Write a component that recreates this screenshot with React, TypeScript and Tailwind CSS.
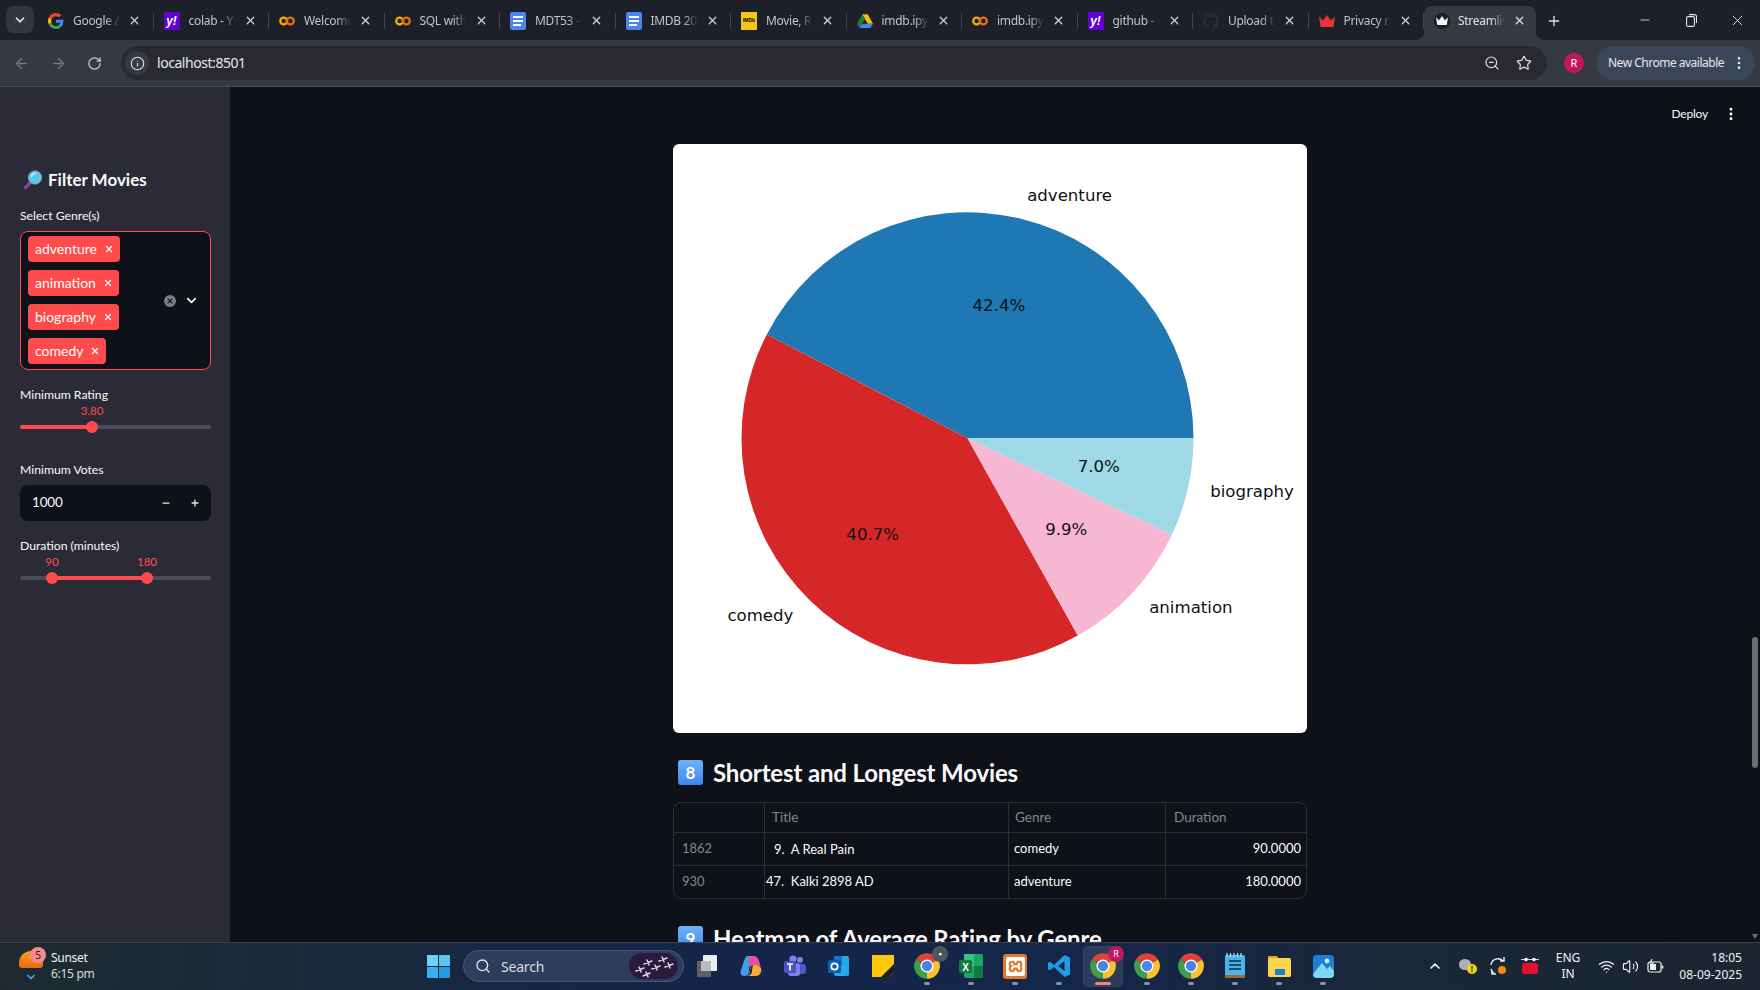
import React from "react";
import { ArrowLeft, ArrowRight, RotateCw, Info, ZoomOut, Star, EllipsisVertical, Plus, Minus, X, ChevronDown, ChevronUp, Wifi, Volume2, Search } from "lucide-react";
import { SiXampp, SiGithub } from "react-icons/si";

const Chrome = ({ s = 28 }: { s?: number }) => (
  <svg width={s} height={s} viewBox="0 0 24 24">
    <path d="M12 12 L2.47 6.5 A11 11 0 0 1 21.53 6.5 Z" fill="#db4437" />
    <path d="M12 12 L21.53 6.5 A11 11 0 0 1 12 23 Z" fill="#fbc02d" />
    <path d="M12 12 L12 23 A11 11 0 0 1 2.47 6.5 Z" fill="#3f9e4d" />
    <circle cx="12" cy="12" r="5.6" fill="#fff" />
    <circle cx="12" cy="12" r="4.4" fill="#4a86e8" />
  </svg>
);

const GoogleG = () => (
  <svg width="16" height="18" viewBox="0 0 48 48">
    <path fill="#EA4335" d="M24 9.5c3.5 0 6.7 1.2 9.2 3.6l6.9-6.9C35.9 2.4 30.5 0 24 0 14.6 0 6.5 5.4 2.6 13.2l8 6.2C12.4 13.7 17.7 9.5 24 9.5z" />
    <path fill="#4285F4" d="M46.9 24.5c0-1.6-.1-3.1-.4-4.5H24v9h12.9c-.6 3-2.2 5.5-4.7 7.2l7.3 5.7c4.3-4 6.4-9.9 6.4-17.4z" />
    <path fill="#FBBC05" d="M10.5 28.6c-.5-1.4-.8-3-.8-4.6s.3-3.2.8-4.6l-8-6.2C.9 16.5 0 20.1 0 24s.9 7.5 2.6 10.8l7.9-6.2z" />
    <path fill="#34A853" d="M24 48c6.5 0 11.9-2.1 15.9-5.8l-7.3-5.7c-2.2 1.5-5 2.4-8.6 2.4-6.3 0-11.6-4.2-13.5-10l-8 6.2C6.5 42.6 14.6 48 24 48z" />
  </svg>
);

const Yahoo = () => (
  <div className="w-[16px] h-[18px] bg-[#5f01d1] flex items-center justify-center text-white text-[12px] font-bold leading-none italic font-[family-name:'Liberation_Sans',sans-serif]">y!</div>
);

const Colab = () => (
  <svg width="18" height="12" viewBox="0 0 18 12" fill="none" stroke="#f9ab00" strokeWidth="2.6">
    <circle cx="5.2" cy="6" r="3.8" />
    <circle cx="12.8" cy="6" r="3.8" stroke="#e8710a" />
  </svg>
);

const Docs = () => (
  <div className="w-[16px] h-[18px] bg-[#4a86f0] rounded-[2px] flex flex-col items-center justify-center gap-[2px]">
    <div className="w-[10px] h-[2px] bg-white" />
    <div className="w-[10px] h-[2px] bg-white" />
    <div className="w-[8px] h-[2px] bg-white self-start ml-[3px]" />
  </div>
);

const Imdb = () => (
  <div className="w-[16px] h-[18px] bg-[#f5c518] flex items-center justify-center text-black text-[5px] font-bold leading-none font-[family-name:'Liberation_Sans',sans-serif]">IMDb</div>
);

const Drive = () => (
  <svg width="16" height="16" viewBox="0 0 24 22">
    <path d="M8 1h8l8 14h-8z" fill="#fbbc04" />
    <path d="M8 1 0 15l4 6.5L12 8z" fill="#188038" />
    <path d="M4 21.5h16l4-6.5H8z" fill="#4285f4" />
  </svg>
);

const Crown = ({ color, s = 16 }: { color: string; s?: number }) => (
  <svg width={s} height={s * 0.75} viewBox="0 0 20 15">
    <path d="M0 2l5 5 5-7 5 7 5-5-2 13H2z" fill={color} />
  </svg>
);

const StreamlitFav = () => (
  <div className="w-[16px] h-[16px] rounded-full bg-[#1b1d23] flex items-center justify-center">
    <Crown color="#f2f2f2" s={12} />
  </div>
);

const tabs: { label: string; icon: React.ReactNode }[] = [
  { label: "Google A", icon: <GoogleG /> },
  { label: "colab - Y", icon: <Yahoo /> },
  { label: "Welcome", icon: <Colab /> },
  { label: "SQL with", icon: <Colab /> },
  { label: "MDT53 -", icon: <Docs /> },
  { label: "IMDB 20", icon: <Docs /> },
  { label: "Movie, R", icon: <Imdb /> },
  { label: "imdb.ipy", icon: <Drive /> },
  { label: "imdb.ipy", icon: <Colab /> },
  { label: "github -", icon: <Yahoo /> },
  { label: "Upload t", icon: <SiGithub size={16} color="#2a2d33" /> },
  { label: "Privacy r", icon: <Crown color="#e8333a" /> },
];

const Tab = ({ label, icon }: { label: string; icon: React.ReactNode }) => (
  <div className="flex items-center w-[115.5px] h-[34px] pb-[5px] pl-[10px] shrink-0">
    <div className="w-[16px] flex justify-center shrink-0">{icon}</div>
    <div className="ml-[9px] w-[47px] overflow-hidden whitespace-nowrap text-[12px] tracking-[-0.3px] text-[#c2c4c7] [mask-image:linear-gradient(to_right,black_70%,transparent)]">{label}</div>
    <X size={13} strokeWidth={2.2} className="ml-[8px] text-[#d5d7da] shrink-0" />
    <div className="ml-auto w-px h-[16px] bg-[#42454c]" />
  </div>
);

const ActiveTab = () => (
  <div className="relative flex items-center w-[112px] h-[34px] pb-[5px] pl-[10px] bg-[#363941] rounded-t-[8px] shrink-0">
    <StreamlitFav />
    <div className="ml-[8px] w-[47px] overflow-hidden whitespace-nowrap text-[12px] tracking-[-0.3px] text-[#e3e4e6] [mask-image:linear-gradient(to_right,black_70%,transparent)]">Streamlit</div>
    <X size={13} strokeWidth={2.2} className="ml-[8px] text-[#e3e4e6] shrink-0" />
    <svg className="absolute left-[-8px] bottom-0" width="8" height="8" viewBox="0 0 8 8"><path d="M8 0v8H0a8 8 0 0 0 8-8z" fill="#363941" /></svg>
    <svg className="absolute right-[-8px] bottom-0" width="8" height="8" viewBox="0 0 8 8"><path d="M0 0v8h8a8 8 0 0 1-8-8z" fill="#363941" /></svg>
  </div>
);

const TabStrip = () => (
  <div className="flex items-end h-[40px] bg-[#1d2028] relative shrink-0">
    <div className="w-[38px] h-[40px] shrink-0 flex items-start pl-[6px] pt-[6px]">
      <div className="w-[28px] h-[27px] rounded-[8px] bg-[#33363e] flex items-center justify-center">
        <ChevronDown size={14} strokeWidth={3} className="text-[#e6e7e9]" />
      </div>
    </div>
    {tabs.map((t, i) => <Tab key={i} {...t} />)}
    <ActiveTab />
    <div className="h-[34px] pb-[5px] ml-[10px] flex items-center">
      <Plus size={16} strokeWidth={2} className="text-[#dfe0e2]" />
    </div>
    <div className="ml-auto flex items-center h-[40px] text-[#e5e6e8]">
      <div className="w-[46px] flex justify-center"><Minus size={14} strokeWidth={1.4} /></div>
      <div className="w-[46px] flex justify-center">
        <svg width="11" height="13" viewBox="0 0 11 13" fill="none" stroke="currentColor" strokeWidth="1.100">
          <rect x="0.600" y="2.600" width="7.800" height="9.800" rx="1.500" />
          <path d="M3 0.600h5.500a2 2 0 0 1 2 2v6.500" />
        </svg>
      </div>
      <div className="w-[46px] flex justify-center"><X size={17} strokeWidth={1.3} /></div>
    </div>
  </div>
);

const Toolbar = () => (
  <div className="flex items-center h-[47px] bg-[#363941] border-b border-[#4a4c52] shrink-0 text-[#c9cbce]">
    <div className="w-[121px] flex items-center shrink-0">
      <ArrowLeft size={17} strokeWidth={2} className="ml-[13px] text-[#74777d]" />
      <ArrowRight size={17} strokeWidth={2} className="ml-[20px] text-[#74777d]" />
      <RotateCw size={15} strokeWidth={2} className="ml-[20px] text-[#c9cbce]" />
    </div>
    <div className="flex items-center w-[1426px] h-[34px] rounded-full bg-[#282a30] shrink-0">
      <div className="ml-[4px] w-[24px] h-[24px] rounded-full bg-[#363941] flex items-center justify-center">
        <Info size={15} strokeWidth={1.8} className="text-[#e3e4e6]" />
      </div>
      <span className="ml-[8px] pb-[1px] text-[14px] tracking-[-0.45px] text-[#e6e7e9]">localhost:8501</span>
      <ZoomOut size={16} strokeWidth={1.8} className="ml-auto mr-[16px] text-[#dadbdd]" />
      <Star size={16} strokeWidth={1.8} className="mr-[15px] text-[#dadbdd]" />
    </div>
    <div className="ml-[17px] w-[20px] h-[20px] rounded-full bg-[#c2185b] text-[11px] text-white flex items-center justify-center shrink-0">R</div>
    <div className="ml-[12px] w-[159px] h-[34px] rounded-full bg-[#3b4558] flex items-center pl-[12px] shrink-0">
      <span className="text-[12px] tracking-[-0.5px] text-[#e8eaed] whitespace-nowrap">New Chrome available</span>
      <EllipsisVertical size={16} className="ml-auto mr-[8px] text-[#e8eaed]" />
    </div>
  </div>
);

const MagnifierEmoji = () => (
  <svg width="20" height="20" viewBox="0 0 20 20">
    <path d="M8 12 L2.5 17.5" stroke="#7b4a9e" strokeWidth="3.6" strokeLinecap="round" />
    <circle cx="12" cy="7.5" r="6.6" fill="#55c8ee" stroke="#8fa3b8" strokeWidth="1" />
    <path d="M8.5 6.5a4 4 0 0 1 4-3.2" stroke="#c6eefb" strokeWidth="1.4" fill="none" strokeLinecap="round" />
  </svg>
);

const Chip = ({ label }: { label: string }) => (
  <div className="flex items-center h-[26px] w-fit rounded-[4px] bg-[#ff4b4b] pl-[7px] pr-[6px] text-white text-[14px] leading-none">
    <span>{label}</span>
    <X size={10} strokeWidth={3} className="ml-[7px]" />
  </div>
);

const Label = ({ children, className = "" }: { children: React.ReactNode; className?: string }) => (
  <div className={`h-[16px] text-[12.2px] leading-[18px] text-[#fafafa] ${className}`}>{children}</div>
);

const Track = ({ start, width }: { start: number; width: number }) => (
  <div className="h-[4px] w-[191px] rounded-full bg-[#4b4c57] mt-[7px] relative">
    <div className="h-[4px] bg-[#ff4b4b] rounded-full" style={{ marginLeft: start, width }} />
    <div className="absolute top-[-4px] w-[12px] h-[12px] rounded-full bg-[#ff4b4b]" style={{ left: start + width - 6 }} />
    {start > 0 && <div className="absolute top-[-4px] w-[12px] h-[12px] rounded-full bg-[#ff4b4b]" style={{ left: start - 6 }} />}
  </div>
);

const Value = ({ left, children }: { left: number; children: React.ReactNode }) => (
  <span className="absolute -translate-x-1/2 text-[11.5px] leading-[14px] text-[#ff4b4b]" style={{ left }}>{children}</span>
);

const Sidebar = () => (
  <aside className="w-[230px] shrink-0 bg-[#2a2b36] pl-[20px] pt-[81px] font-[family-name:Lato,sans-serif]">
    <div className="flex items-center h-[24px] ml-[3px]">
      <MagnifierEmoji />
      <span className="ml-[5px] text-[17px] font-bold text-[#fafafa]">Filter Movies</span>
    </div>
    <Label className="mt-[15px]">Select Genre(s)</Label>
    <div className="mt-[8px] w-[191px] h-[139px] rounded-[8px] border border-[#ff4b4b] bg-[#0e1117] flex items-center">
      <div className="flex flex-col gap-[8px] pl-[7px] pb-[2px] w-[140px]">
        <Chip label="adventure" />
        <Chip label="animation" />
        <Chip label="biography" />
        <Chip label="comedy" />
      </div>
      <div className="ml-[3px] w-[12px] h-[12px] rounded-full bg-[#7c7d88] flex items-center justify-center">
        <X size={8} strokeWidth={3.5} className="text-[#1b1c22]" />
      </div>
      <ChevronDown size={15} strokeWidth={2.6} className="ml-[8px] text-white" />
    </div>
    <Label className="mt-[16px]">Minimum Rating</Label>
    <div className="relative h-[14px] mt-[2px]"><Value left={72}>3.80</Value></div>
    <Track start={0} width={72} />
    <Label className="mt-[32px]">Minimum Votes</Label>
    <div className="mt-[8px] w-[191px] h-[36px] rounded-[8px] bg-[#0e1117] flex items-center pl-[12px] pb-[1px] text-[13.5px] tracking-[-0.2px] text-[#fafafa]">
      <span>1000</span>
      <Minus size={10} strokeWidth={3} className="ml-auto text-[#e8e8ea]" />
      <Plus size={10} strokeWidth={3.2} className="ml-[19px] mr-[11px] text-[#e8e8ea]" />
    </div>
    <Label className="mt-[16px]">Duration (minutes)</Label>
    <div className="relative h-[14px] mt-[2px]"><Value left={32}>90</Value><Value left={127}>180</Value></div>
    <Track start={32} width={95} />
  </aside>
);

const Pie = () => (
  <svg width="634" height="589" viewBox="0 0 634 589" className="block">
    <path d="M294.5 294.3 L520.5 294.3 A226 226 0 0 0 93.8 190.4 Z" fill="#1f77b4" />
    <path d="M294.5 294.3 L93.8 190.4 A226 226 0 0 0 404.8 491.6 Z" fill="#d62728" />
    <path d="M294.5 294.3 L404.8 491.6 A226 226 0 0 0 499 390.5 Z" fill="#f7b6d2" />
    <path d="M294.5 294.3 L499 390.5 A226 226 0 0 0 520.5 294.3 Z" fill="#9edae5" />
    <g fontFamily="'DejaVu Sans', sans-serif" fontSize="16.6" textAnchor="middle" dominantBaseline="central" fill="#111">
      <text x="396.6" y="51.3">adventure</text>
      <text x="579" y="347.6">biography</text>
      <text x="517.9" y="463.2">animation</text>
      <text x="87.4" y="471">comedy</text>
      <text x="325.9" y="161.3">42.4%</text>
      <text x="199.7" y="390.3">40.7%</text>
      <text x="393.3" y="385.8">9.9%</text>
      <text x="425.8" y="322.9">7.0%</text>
    </g>
  </svg>
);

const Heading = ({ n, children, className = "" }: { n: string; children: React.ReactNode; className?: string }) => (
  <div className={`flex items-center h-[25px] pl-[5px] ${className}`}>
    <div className="w-[25px] h-[25px] rounded-[3px] bg-gradient-to-b from-[#6db3f8] to-[#3c86ec] flex items-center justify-center text-white text-[17px] font-bold leading-none">{n}</div>
    <h3 className="ml-[10px] text-[24px] tracking-[-0.15px] font-bold text-[#fafafa] leading-[25px] whitespace-nowrap">{children}</h3>
  </div>
);

const cols = "grid grid-cols-[90px_244px_157px_141px]";
const cell = "flex items-center border-l border-[#2b2d33]";

const DataTable = () => (
  <div className="mt-[17px] w-[634px] rounded-[8px] border border-[#2b2d33] overflow-hidden text-[13px]">
    <div className={`${cols} h-[29px] text-[13.5px] text-[#85868c]`}>
      <div />
      <div className={`${cell} pl-[7px]`}>Title</div>
      <div className={`${cell} pl-[6px]`}>Genre</div>
      <div className={`${cell} pl-[8px]`}>Duration</div>
    </div>
    <div className={`${cols} h-[33px] border-t border-[#2b2d33] text-[#fafafa]`}>
      <div className="flex items-center pl-[8px] text-[#85868c]">1862</div>
      <div className={`${cell} pl-[9px] pt-[2px] whitespace-pre`}>9.  A Real Pain</div>
      <div className={`${cell} pl-[5px]`}>comedy</div>
      <div className={`${cell} justify-end pr-[5px]`}>90.0000</div>
    </div>
    <div className={`${cols} h-[33px] border-t border-[#2b2d33] text-[#fafafa]`}>
      <div className="flex items-center pl-[8px] text-[#85868c]">930</div>
      <div className={`${cell} pl-[1px] whitespace-pre`}>47.  Kalki 2898 AD</div>
      <div className={`${cell} pl-[5px]`}>adventure</div>
      <div className={`${cell} justify-end pr-[5px]`}>180.0000</div>
    </div>
  </div>
);

const Main = () => (
  <main className="relative flex-1 min-w-0 overflow-hidden bg-[#0e1117] font-[family-name:Lato,sans-serif]">
    <div className="flex items-center justify-end h-[54px] pr-[21px] text-[#fafafa]">
      <span className="text-[12px] tracking-[-0.2px]">Deploy</span>
      <EllipsisVertical size={16} strokeWidth={2.4} className="ml-[15px]" />
    </div>
    <div className="ml-[443px] w-[634px] mt-[3px]">
      <div className="bg-white rounded-[6px] overflow-hidden"><Pie /></div>
      <Heading n="8" className="mt-[27px]">Shortest and Longest Movies</Heading>
      <DataTable />
      <Heading n="9" className="mt-[27px]">Heatmap of Average Rating by Genre</Heading>
    </div>
    <div className="absolute right-[2px] top-[550px] w-[6px] h-[131px] rounded-full bg-[#6b6d70]" />
    <svg className="absolute right-[2px] bottom-[3px]" width="6" height="5" viewBox="0 0 6 5"><path d="M0 0h6L3 5z" fill="#6b6d70" /></svg>
  </main>
);

const Planes = () => (
  <svg width="49" height="26" viewBox="0 0 49 26">
    <rect width="49" height="26" rx="13" fill="#2b1a3e" />
    <g stroke="#d9d7e2" strokeWidth="1.5" strokeLinecap="round">
      <path d="M7 18l8-3M10 14l2 5" /><path d="M15 11l8-3M18 7l2 5" /><path d="M23 16l8-3M26 12l2 5" />
      <path d="M30 8l8-3M33 4l2 5" /><path d="M36 14l8-3M39 10l2 5" /><path d="M14 23l7-3M17 19l2 5" />
    </g>
  </svg>
);

const Slot = ({ children, dot, active }: { children?: React.ReactNode; dot?: boolean; active?: boolean }) => (
  <div className="relative w-[44px] h-[47px] flex items-center justify-center shrink-0">
    {active && <div className="absolute left-[2px] right-[2px] top-[3px] bottom-[3px] rounded-[5px] bg-[#2c3b5a] border border-[#34456a]" />}
    <div className="relative flex items-center justify-center">{children}</div>
    {dot && <div className={`absolute bottom-[5px] h-[3px] rounded-full ${active ? "w-[16px] bg-[#f4877a]" : "w-[6px] bg-[#8b93a3]"}`} />}
  </div>
);

const Badge = ({ children, className }: { children?: React.ReactNode; className: string }) => (
  <div className={`absolute top-[-6px] right-[-7px] w-[16px] h-[16px] rounded-full flex items-center justify-center text-[9px] text-white ${className}`}>{children}</div>
);

const Taskbar = () => (
  <div className="flex items-center h-[48px] pb-[1px] shrink-0 border-t border-[#3a4352] bg-[linear-gradient(90deg,#1f2a30_0%,#1a2a3c_18%,#142548_35%,#14264a_62%,#1a2738_80%,#1c2530_100%)] text-[12px] text-[#f1f2f4] font-[family-name:'Noto_Sans',sans-serif]">
    <div className="w-[427px] shrink-0 flex items-center pl-[19px]">
      <div className="relative w-[24px] h-[36px] shrink-0">
        <div className="absolute top-[3px] left-0 w-[24px] h-[17px] rounded-t-[12px] rounded-b-[3px] bg-gradient-to-b from-[#f7a11b] to-[#e56a10]" />
        <div className="absolute top-[-1px] left-[11px] w-[16px] h-[16px] rounded-full bg-[#f58a8a] text-[#3a1515] text-[10px] flex items-center justify-center">5</div>
        <ChevronDown size={12} strokeWidth={3.5} className="absolute top-[23px] left-[6px] text-[#3ea6f0]" />
      </div>
      <div className="ml-[8px] leading-[16px] text-[12px] tracking-[-0.3px]">
        <div>Sunset</div>
        <div className="text-[#d8dade]">6:15 pm</div>
      </div>
    </div>
    <div className="grid grid-cols-2 gap-[1px] w-[23px] h-[23px] shrink-0">
      <div className="bg-[#6fd3f7]" /><div className="bg-[#56c6f5]" /><div className="bg-[#2fb0ef]" /><div className="bg-[#1e9ce8]" />
    </div>
    <div className="ml-[13px] w-[221px] h-[32px] rounded-full bg-[#2f3d5c] border border-[#46557a] flex items-center pl-[11px] pr-[5px] shrink-0">
      <Search size={16} strokeWidth={2} className="text-[#e6e8ec]" />
      <span className="ml-[10px] text-[14px] tracking-[-0.2px] text-[#d9dce2]">Search</span>
      <div className="ml-auto"><Planes /></div>
    </div>
    <div className="flex ml-[1px] shrink-0">
      <Slot>
        <div className="relative w-[24px] h-[24px]">
          <div className="absolute left-[2px] bottom-[1px] w-[14px] h-[16px] bg-[#5f6166] rounded-[1px]" />
          <div className="absolute right-[2px] top-[1px] w-[14px] h-[16px] bg-[#eceef0] rounded-[1px]" />
          <div className="absolute left-[6px] top-[7px] w-[10px] h-[10px] bg-[#b9bbbf]" />
        </div>
      </Slot>
      <Slot>
        <svg width="24" height="24" viewBox="0 0 24 24">
          <path d="M9 2h6c-3 2-5 6-5 11v4c0 3-2 5-5 5-3 0-4-3-3-6l3-9c1-3 2-5 4-5z" fill="#3f9ef0" />
          <path d="M10 2h5c3 0 4 2 5 5l2 7c-2-3-5-4-8-3l-4 2c0-5 0-9 0-11z" fill="#e94f9b" />
          <path d="M14 11c3-1 6 0 8 3 1 4-1 8-5 8H7c4 0 6-2 6-6z" fill="#f6a93b" />
          <path d="M13 12c-2 3-3 6-3 10H7c3 0 4-2 4-5v-3z" fill="#7ac94b" />
        </svg>
      </Slot>
      <Slot>
        <svg width="24" height="24" viewBox="0 0 24 24">
          <circle cx="17" cy="6" r="3" fill="#7b83eb" />
          <rect x="13" y="10" width="10" height="10" rx="3" fill="#5059c9" />
          <circle cx="10" cy="5" r="3.6" fill="#7b83eb" />
          <rect x="5" y="9" width="12" height="13" rx="3" fill="#7b83eb" />
          <rect x="1" y="7" width="12" height="12" rx="1.5" fill="#4b53bc" />
          <path d="M4 10h6M7 10v6.5" stroke="#fff" strokeWidth="1.7" />
        </svg>
      </Slot>
      <Slot>
        <svg width="24" height="24" viewBox="0 0 24 24">
          <rect x="7" y="2" width="15" height="20" rx="2" fill="#28a8ea" />
          <rect x="7" y="2" width="8" height="10" fill="#0f78d4" />
          <rect x="1" y="6" width="13" height="13" rx="1.5" fill="#0f5fb0" />
          <circle cx="7.5" cy="12.5" r="3.2" fill="none" stroke="#fff" strokeWidth="1.7" />
        </svg>
      </Slot>
      <Slot>
        <svg width="24" height="24" viewBox="0 0 24 24">
          <path d="M1 1h22v17l-5 5H1z" fill="#fcca0a" />
          <path d="M10 23l13-13v8l-5 5z" fill="#1f1f1f" />
        </svg>
      </Slot>
      <Slot dot><Chrome /><Badge className="bg-[#4c5560]">▪</Badge></Slot>
      <Slot dot>
        <svg width="26" height="26" viewBox="0 0 26 26">
          <rect x="6" y="1" width="19" height="24" rx="2" fill="#21a366" />
          <rect x="6" y="1" width="10" height="12" fill="#33c481" />
          <rect x="16" y="13" width="9" height="12" fill="#107c41" />
          <rect x="1" y="7" width="13" height="13" rx="1.5" fill="#107c41" />
          <text x="7.5" y="17.5" textAnchor="middle" fontSize="10" fontWeight="700" fill="#fff" fontFamily="'Liberation Sans', sans-serif">X</text>
        </svg>
      </Slot>
      <Slot dot>
        <div className="w-[24px] h-[25px] rounded-[3px] bg-[#e2792b] flex items-center justify-center"><SiXampp size={19} color="#fff" /></div>
      </Slot>
      <Slot dot>
        <svg width="24" height="24" viewBox="0 0 24 24">
          <path d="M17.500 1 7 11 2.800 7.800 1 8.800v6.400l1.800 1L7 13l10.500 10 5.500-2.500v-17zM17.500 7v10L11 12z" fill="#1f9be8" fillRule="evenodd" />
        </svg>
      </Slot>
      <Slot dot active><Chrome /><Badge className="bg-[#c2185b]">R</Badge></Slot>
      <Slot dot><Chrome /></Slot>
      <Slot dot><Chrome /></Slot>
      <Slot dot>
        <svg width="22" height="26" viewBox="0 0 22 26">
          <rect x="1" y="2" width="20" height="23" rx="1.5" fill="#49b4e8" />
          <rect x="1" y="22" width="20" height="3" fill="#a5672a" />
          <path d="M3 0v4M6.500 0v4M10 0v4M13.500 0v4M17 0v4" stroke="#bfe6f7" strokeWidth="1.2" />
          <path d="M5 8h12M5 12h12M5 16h12" stroke="#13506f" strokeWidth="1.8" />
        </svg>
      </Slot>
      <Slot dot>
        <svg width="25" height="24" viewBox="0 0 25 24">
          <path d="M1 3a1 1 0 0 1 1-1h8l2 3h-11z" fill="#e8a80f" />
          <rect x="1" y="4" width="23" height="19" rx="1.5" fill="#fcd34d" />
          <rect x="8" y="15" width="10" height="6" rx="1" fill="#1b7cd6" />
        </svg>
      </Slot>
      <Slot dot>
        <svg width="23" height="25" viewBox="0 0 23 25">
          <rect x="1" y="1" width="21" height="23" rx="4" fill="#1e7fd6" />
          <path d="M1 20l9-11 5 6 3-3 4 5v3a4 4 0 0 1-4 4H5a4 4 0 0 1-4-4z" fill="#7fd8f2" />
          <circle cx="15" cy="7" r="2.400" fill="#bfeefc" />
        </svg>
      </Slot>
    </div>
    <div className="flex items-center ml-[68px] shrink-0">
      <div className="w-[43px] flex justify-center"><ChevronUp size={16} strokeWidth={2.4} /></div>
      <div className="w-[22px] relative flex justify-center h-[18px]">
        <div className="absolute left-[3px] top-[2px] w-[12px] h-[11px] rounded-full bg-[#aab0b8]" />
        <div className="absolute left-[11px] top-[7px] w-[10px] h-[10px] rounded-full bg-[#f2d500] text-[#222] text-[8px] leading-[10px] text-center font-bold">!</div>
      </div>
      <div className="w-[40px] flex justify-center">
        <svg width="20" height="20" viewBox="0 0 20 20" fill="none" stroke="#eceef0" strokeWidth="1.4">
          <path d="M3 9a7 7 0 0 1 12-4" /><path d="M12 5h4V1" />
          <path d="M3 13a6 6 0 0 0 3 4" /><path d="M8 18H4v-3" />
          <circle cx="14" cy="14" r="4" fill="#f28c11" stroke="none" />
        </svg>
      </div>
      <div className="w-[24px] flex justify-center">
        <svg width="18" height="18" viewBox="0 0 18 18">
          <circle cx="5" cy="2.500" r="1.800" fill="#fff" /><circle cx="13" cy="2.500" r="1.800" fill="#fff" />
          <path d="M0 2.500h18" stroke="#fff" strokeWidth="0.8" />
          <rect x="1" y="6" width="16" height="11" rx="2" fill="#e0102e" />
        </svg>
      </div>
      <div className="w-[52px] text-center leading-[16px] text-[12px]"><div>ENG</div><div>IN</div></div>
      <div className="w-[24px] flex justify-center"><Wifi size={17} strokeWidth={1.8} /></div>
      <div className="w-[24px] flex justify-center"><Volume2 size={17} strokeWidth={1.6} /></div>
      <div className="w-[26px] flex justify-center">
        <svg width="17" height="14" viewBox="0 0 17 14" fill="none" stroke="#eceef0" strokeWidth="1.2">
          <rect x="1" y="3" width="13" height="10" rx="2" />
          <rect x="3" y="5" width="6" height="6" fill="#eceef0" stroke="none" />
          <path d="M15.500 6.500v3" strokeWidth="1.6" />
          <path d="M5 0L3 4h3L4 8" fill="none" />
        </svg>
      </div>
      <div className="w-[74px] text-right leading-[17px] text-[12px]"><div>18:05</div><div>08-09-2025</div></div>
    </div>
  </div>
);

export default function App() {
  return (
    <div className="w-[1760px] h-[990px] flex flex-col overflow-hidden bg-[#0e1117] font-[family-name:'Noto_Sans',sans-serif]">
      <TabStrip />
      <Toolbar />
      <div className="flex flex-1 min-h-0">
        <Sidebar />
        <Main />
      </div>
      <Taskbar />
    </div>
  );
}
